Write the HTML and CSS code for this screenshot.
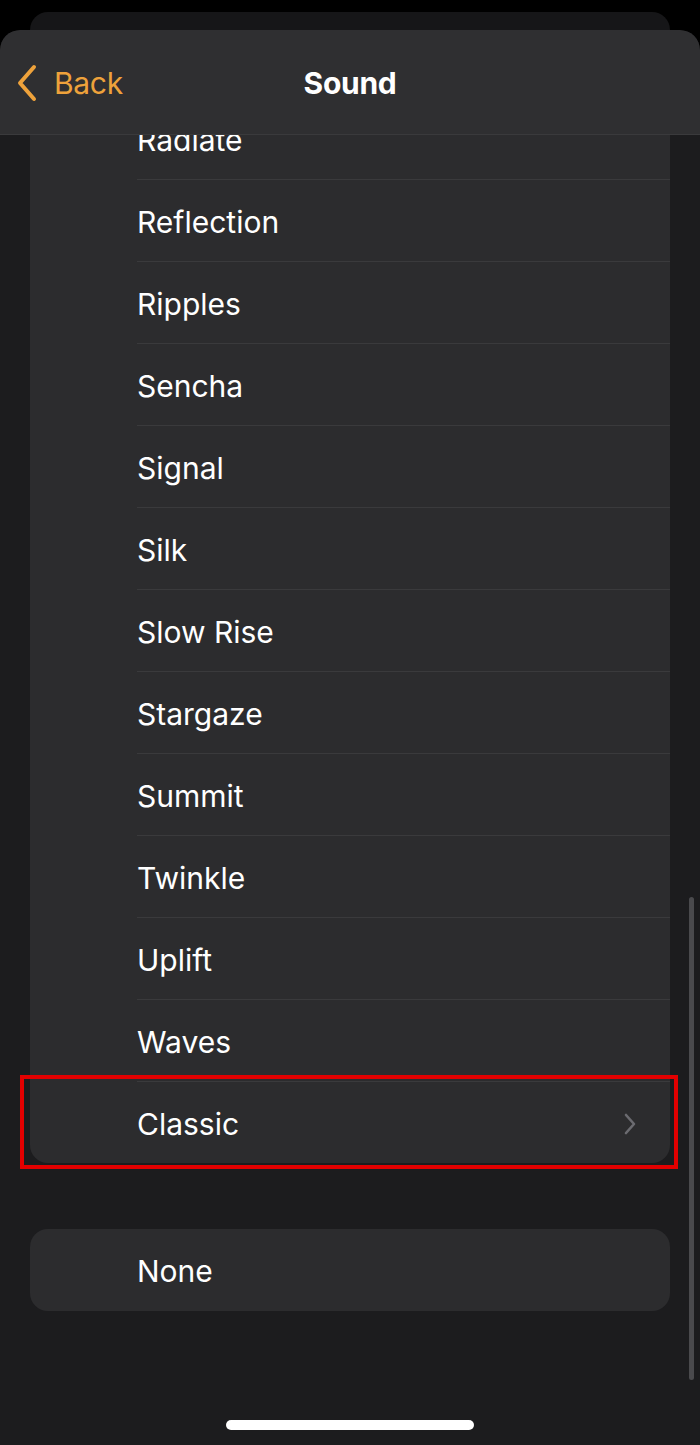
FILE: index.html
```html
<!DOCTYPE html>
<html>
<head>
<meta charset="utf-8">
<link rel="stylesheet" href="styles.css">
</head>
<body>
<div class="behind"></div>
<div class="sheet">
  <div class="header">
    <div class="back">
      <svg class="back-chev" width="26" height="38" viewBox="0 0 26 38"><path d="M20 3 L6 19 L20 35" fill="none" stroke="#eea23b" stroke-width="4" stroke-linecap="round" stroke-linejoin="round"/></svg>
      <span>Back</span>
    </div>
    <div class="title">Sound</div>
  </div>
  <div class="list card">
    <div class="row"><div class="label">Radar</div></div>
    <div class="row"><div class="label">Radiate</div></div>
    <div class="row"><div class="label">Reflection</div></div>
    <div class="row"><div class="label">Ripples</div></div>
    <div class="row"><div class="label">Sencha</div></div>
    <div class="row"><div class="label">Signal</div></div>
    <div class="row"><div class="label">Silk</div></div>
    <div class="row"><div class="label">Slow Rise</div></div>
    <div class="row"><div class="label">Stargaze</div></div>
    <div class="row"><div class="label">Summit</div></div>
    <div class="row"><div class="label">Twinkle</div></div>
    <div class="row"><div class="label">Uplift</div></div>
    <div class="row"><div class="label">Waves</div></div>
    <div class="row"><div class="label">Classic
      <svg class="chev" width="16" height="24" viewBox="0 0 16 24"><path d="M4 3 L12 12 L4 21" fill="none" stroke="#6b6b70" stroke-width="2.6" stroke-linecap="round" stroke-linejoin="round"/></svg>
    </div></div>
  </div>
  <div class="card none">
    <div class="row"><div class="label">None</div></div>
  </div>
  <div class="highlight"></div>
  <div class="scrollbar"></div>
  <div class="home"></div>
</div>
</body>
</html>
```
FILE: styles.css
```css
* { box-sizing: border-box; }
html, body { margin: 0; padding: 0; }
body {
  background: #000;
  width: 700px;
  height: 1445px;
  overflow: hidden;
  font-family: Inter, "Liberation Sans", sans-serif;
  color: #fff;
}
.behind {
  margin: 12px 30px 0;
  height: 18px;
  background: #161618;
  border-radius: 20px 20px 0 0;
}
.sheet {
  position: relative;
  height: 1415px;
  background: #1c1c1e;
  border-radius: 20px 20px 0 0;
  overflow: hidden;
}
.header {
  position: absolute;
  left: 0; top: 0; right: 0;
  height: 105px;
  background: #2f2f31;
  border-bottom: 1px solid #3a3a3c;
  border-radius: 20px 20px 0 0;
  z-index: 5;
}
.back {
  position: absolute;
  left: 14px;
  top: 34px;
  display: flex;
  align-items: center;
  gap: 14px;
  color: #eea23b;
  font-size: 30px;
  letter-spacing: -0.3px;
}
.title {
  text-align: center;
  padding-top: 34px;
  font-size: 30px;
  font-weight: 700;
  letter-spacing: -0.3px;
  line-height: 38px;
}
.card {
  margin: 0 30px;
  background: #2c2c2e;
  border-radius: 18px;
}
.list { margin-top: -15px; }
.row {
  height: 82px;
  padding-left: 107px;
}
.label {
  height: 82px;
  display: flex;
  align-items: center;
  justify-content: space-between;
  padding-right: 32px;
  padding-top: 2px;
  font-size: 30px;
  letter-spacing: 0;
  border-top: 1px solid #3a3a3c;
}
.row:first-child .label { border-top: none; }
.chev { display: block; }
.none { margin-top: 66px; }
.highlight {
  position: absolute;
  left: 20px;
  top: 1045px;
  width: 658px;
  height: 94px;
  border: 4px solid #e30000;
}
.scrollbar {
  position: absolute;
  left: 689px;
  top: 867px;
  width: 5px;
  height: 483px;
  border-radius: 3px;
  background: #4a4a4d;
}
.home {
  position: absolute;
  left: 226px;
  top: 1390px;
  width: 248px;
  height: 10px;
  border-radius: 5px;
  background: #fff;
}
```
